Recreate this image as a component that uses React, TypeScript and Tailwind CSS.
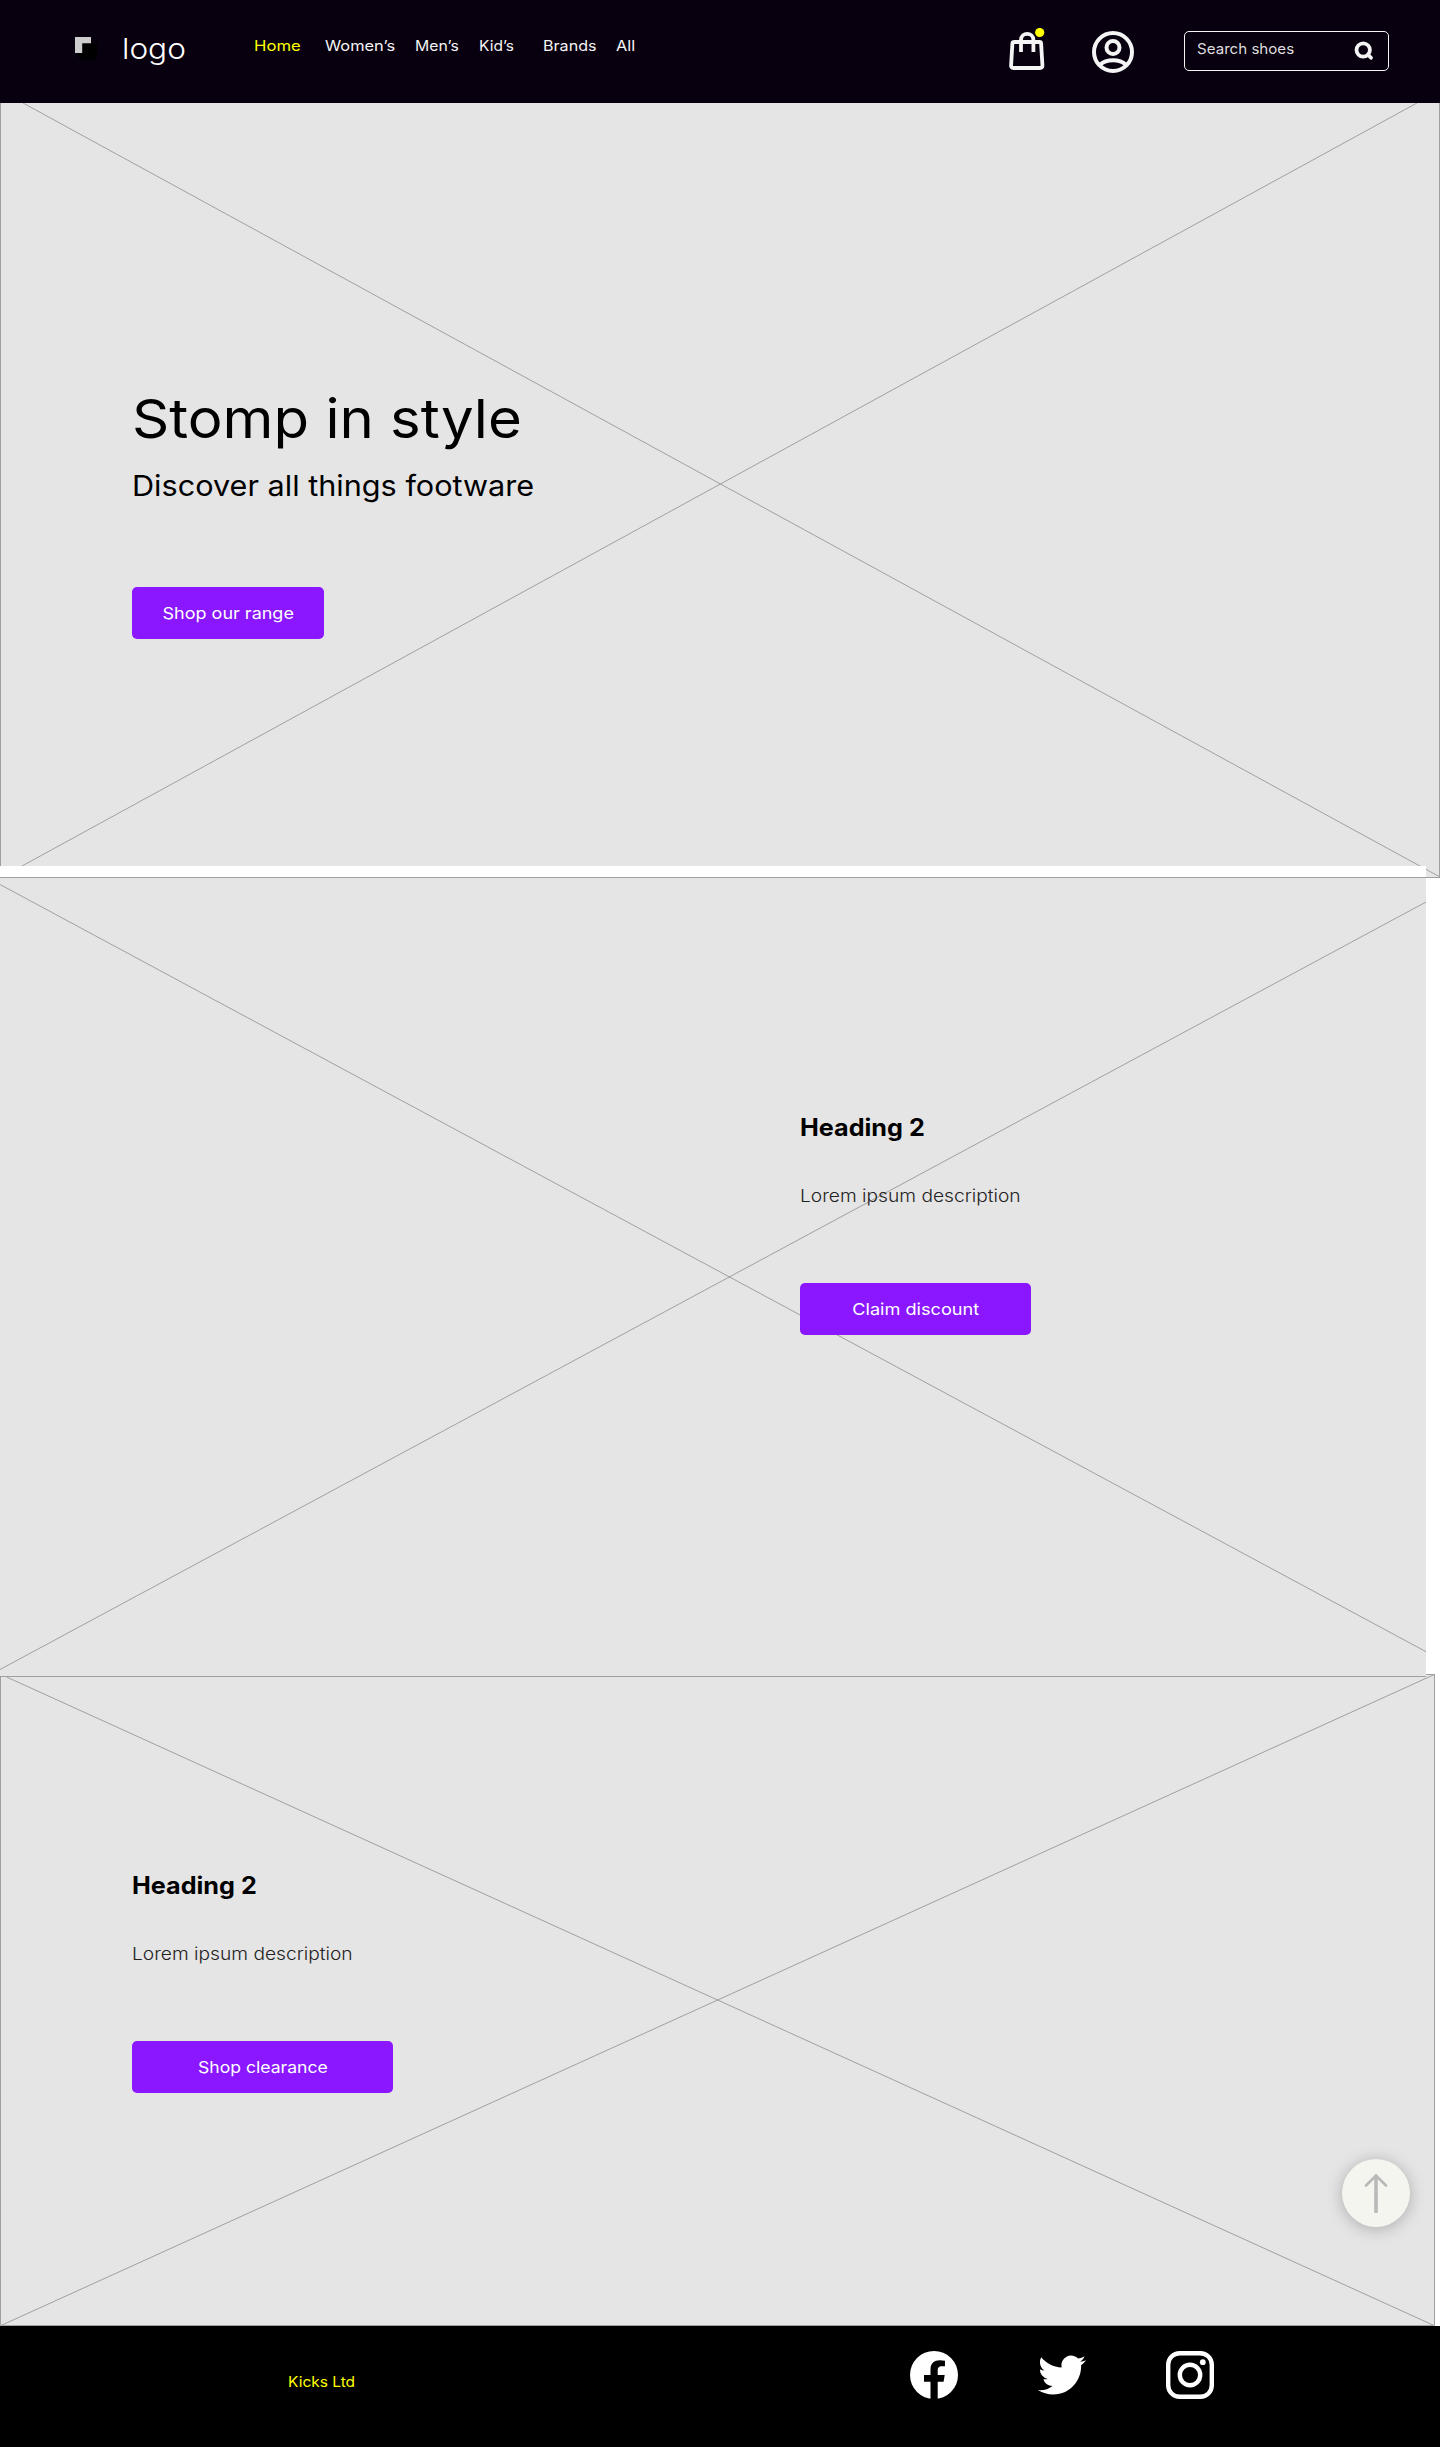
import type { ReactNode } from "react";

const LINE = "#a0a0a0";

const NAV = [
  { label: "Home", box: "w-[71px] text-[#ffff00]", stretch: "scale-x-[1.15]" },
  { label: "Women’s", box: "w-[90px] text-[#f4f4f4]", stretch: "scale-x-[1.13]" },
  { label: "Men’s", box: "w-[64px] text-[#f4f4f4]", stretch: "scale-x-[1.09]" },
  { label: "Kid’s", box: "w-[64.5px] text-[#f4f4f4]", stretch: "scale-x-[1.07]" },
  { label: "Brands", box: "w-[73px] text-[#f4f4f4]", stretch: "scale-x-[1.11]" },
  { label: "All", box: "w-[24px] text-[#f4f4f4]", stretch: "scale-x-[1.125]" },
];

function Wide({ children, stretch }: { children: ReactNode; stretch: string }) {
  return <span className={`inline-block origin-left whitespace-nowrap ${stretch}`}>{children}</span>;
}

function Cta({ label, width, stretch }: { label: string; width: string; stretch: string }) {
  return (
    <button
      className={`flex h-[52px] items-center justify-center rounded-[5px] bg-[#8a17ff] text-[16.5px] leading-[52px] text-white ${width}`}
    >
      <span className={`inline-block whitespace-nowrap ${stretch}`}>{label}</span>
    </button>
  );
}

function Promo({ label, width, stretch }: { label: string; width: string; stretch: string }) {
  return (
    <div className="relative flex flex-col items-start">
      <h2 className="mt-px text-[24px] leading-8 font-bold text-black">
        <Wide stretch="scale-x-[1.049]">Heading 2</Wide>
      </h2>
      <p className="mt-[38px] mb-[73px] text-[17.3px] leading-7 font-light text-[#222]">
        <Wide stretch="scale-x-[1.11]">Lorem ipsum description</Wide>
      </p>
      <Cta label={label} width={width} stretch={stretch} />
    </div>
  );
}

function Header() {
  return (
    <header className="flex h-[103px] items-start bg-[#08000f]">
      <svg className="mt-[37px] ml-[75px] h-6 w-6 shrink-0" viewBox="0 0 24 24">
        <path d="M3 6H22V21Q22 23 20 23H7Q3 22 3 18Z" fill="#000" />
        <path d="M0 0H16V6.3H7.2V16H0Z" fill="#cdcdcd" />
      </svg>
      <div className="mt-[29px] ml-[23px] w-[131.5px] text-[29px] leading-10 font-light text-white">
        <Wide stretch="scale-x-[1.09]">logo</Wide>
      </div>
      <nav className="mt-[36px] flex text-[14.5px] leading-5">
        {NAV.map((n) => (
          <a key={n.label} className={n.box}>
            <Wide stretch={n.stretch}>{n.label}</Wide>
          </a>
        ))}
      </nav>
      <div className="mt-[28px] ml-auto flex items-start">
        <svg className="h-[46px] w-[40px]" viewBox="0 0 40 46" fill="none">
          <path
            d="M5.5 14H30.5Q32 14 32.1 15.5L33.4 37Q33.6 40 31 40H4.500Q1.9 40 2.1 37L3.4 15.5Q3.5 14 5.5 14Z"
            stroke="#f4f4f4"
            strokeWidth="3.8"
          />
          <path d="M12 24V12C12 3.800 24.400 3.800 24.400 12V24" stroke="#f4f4f4" strokeWidth="3.8" />
          <circle cx="30.700" cy="4.500" r="4.600" fill="#ffff00" />
        </svg>
        <svg className="mt-[3px] ml-[43px] h-[42px] w-[42px]" viewBox="0 0 42 42" fill="none" stroke="#f4f4f4">
          <circle cx="21" cy="21" r="19" strokeWidth="4" />
          <circle cx="21" cy="16.500" r="6.500" strokeWidth="4" />
          <path d="M8.500 33.500C14 27.800 28 27.800 33.500 33.500" strokeWidth="4" />
        </svg>
        <div className="mt-[3px] mr-[51px] ml-[50px] flex h-[40px] w-[205px] items-start rounded-[5px] border border-[#f4f4f4] pl-[12px]">
          <div className="mt-[7px] text-[14.5px] leading-5 text-[#dedede]">
            <Wide stretch="scale-x-[1.042]">Search shoes</Wide>
          </div>
          <svg className="mt-[9px] mr-[14px] ml-auto h-5 w-5" viewBox="0 0 20 20" fill="none" stroke="#f4f4f4">
            <circle cx="9.200" cy="9" r="6.700" strokeWidth="3.800" />
            <path d="M14 13.700L17 16.800" strokeWidth="3.800" strokeLinecap="round" />
          </svg>
        </div>
      </div>
    </header>
  );
}

function Hero() {
  return (
    <section className="relative h-[775px] border-b border-[#a0a0a0] bg-[#e5e5e5] pt-[286px] pl-[132px]">
      <svg className="absolute inset-0 h-[774px] w-[1440px]" viewBox="0 0 1440 774" stroke={LINE} fill="none">
        <path d="M.5 0V774M1439.500 0V774" />
        <path d="M23 0L1440 774M1417 0L22 763" />
      </svg>
      <div className="absolute top-[763px] left-0 h-[11px] w-[1426px] bg-white" />
      <div className="relative flex flex-col items-start text-black">
        <h1 className="text-[54px] leading-[60px] font-normal">
          <Wide stretch="scale-x-[1.076]">Stomp in style</Wide>
        </h1>
        <p className="mt-[17px] mb-[81px] text-[29px] leading-10">
          <Wide stretch="scale-x-[1.056]">Discover all things footware</Wide>
        </p>
        <Cta label="Shop our range" width="w-[192px]" stretch="scale-x-[1.09]" />
      </div>
    </section>
  );
}

function Footer() {
  return (
    <footer className="flex h-[121px] items-start bg-black">
      <div className="mt-[46px] ml-[288px] text-[14.5px] leading-5 text-[#ffff00]">
        <Wide stretch="scale-x-[1.067]">Kicks Ltd</Wide>
      </div>
      <div className="mt-[25px] mr-[226px] ml-auto flex gap-20 text-white">
        <svg className="h-12 w-12" viewBox="0 0 48 48">
          <circle cx="24" cy="24" r="24" fill="#fff" />
          <path
            d="M20.500 48V30.700H14V24H20.500V18.500C20.500 12 24.400 9.200 29.700 9.200Q32.500 9.200 35 9.800V15.300H31.800C28.700 15.300 27.700 17.200 27.700 19.500V24H34.700L33.600 30.700H27.700V48Z"
            fill="#000"
          />
        </svg>
        <svg className="h-12 w-12" viewBox="0 0 24 24" fill="currentColor">
          <path d="M23.953 4.570a10 10 0 01-2.825.775 4.958 4.958 0 002.163-2.723c-.951.555-2.005.959-3.127 1.184a4.920 4.920 0 00-8.384 4.482C7.690 8.095 4.067 6.130 1.640 3.162a4.822 4.822 0 00-.666 2.475c0 1.710.870 3.213 2.188 4.096a4.904 4.904 0 01-2.228-.616v.060a4.923 4.923 0 003.946 4.827 4.996 4.996 0 01-2.212.085 4.936 4.936 0 004.604 3.417 9.867 9.867 0 01-6.102 2.105c-.390 0-.779-.023-1.170-.067a13.995 13.995 0 007.557 2.209c9.053 0 13.998-7.496 13.998-13.985 0-.210 0-.420-.015-.630A9.935 9.935 0 0024 4.590z" />
        </svg>
        <svg className="h-12 w-12" viewBox="0 0 48 48" fill="none" stroke="#fff">
          <rect x="2.200" y="2.200" width="43.600" height="43.600" rx="11.500" strokeWidth="4.400" />
          <circle cx="24" cy="24" r="10.200" strokeWidth="4.400" />
          <circle cx="36.800" cy="11.200" r="2.900" fill="#fff" stroke="none" />
        </svg>
      </div>
    </footer>
  );
}

export default function App() {
  return (
    <div className="w-[1440px] bg-white font-[Inter,sans-serif]">
      <Header />
      <Hero />
      <section className="relative h-[799px] w-[1426px] border-b border-[#a0a0a0] bg-[#e5e5e5] pt-[233px] pl-[800px]">
        <svg className="absolute inset-0 h-[798px] w-[1426px]" viewBox="0 0 1426 798" stroke={LINE} fill="none">
          <path d="M0 6.500L1426 773.700M0 791.500L1426 24" />
        </svg>
        <Promo label="Claim discount" width="w-[231px]" stretch="scale-x-[1.1]" />
      </section>
      <section className="relative h-[649px] w-[1435px] bg-[#e5e5e5] pt-[192px] pl-[132px]">
        <svg
          className="absolute inset-0 h-[649px] w-[1435px] overflow-visible"
          viewBox="0 0 1435 649"
          stroke={LINE}
          fill="none"
        >
          <path d="M1426 -3H1435V0H1426Z" fill="#e5e5e5" stroke="none" />
          <path d="M1426 -2.500H1434.500V648.500H.5V0" />
          <path d="M6.600 0L1434 648.500M1 648.500L1426 1.300L1434.500 -2.500" />
        </svg>
        <Promo label="Shop clearance" width="w-[261px]" stretch="scale-x-[1.065]" />
        <button className="absolute top-[482px] left-[1342px] flex h-[68px] w-[68px] items-center justify-center rounded-full bg-[#f3f5ee] shadow-[0_2px_16px_rgba(0,0,0,0.25)]">
          <svg className="h-10 w-6" viewBox="0 0 24 40" fill="none" stroke="#b9b9b9" strokeWidth="3.600">
            <path d="M12 40V2" />
            <path d="M2 12.500L12 2.500L22 12.500" strokeWidth="2.600" strokeLinecap="round" />
          </svg>
        </button>
      </section>
      <Footer />
    </div>
  );
}
